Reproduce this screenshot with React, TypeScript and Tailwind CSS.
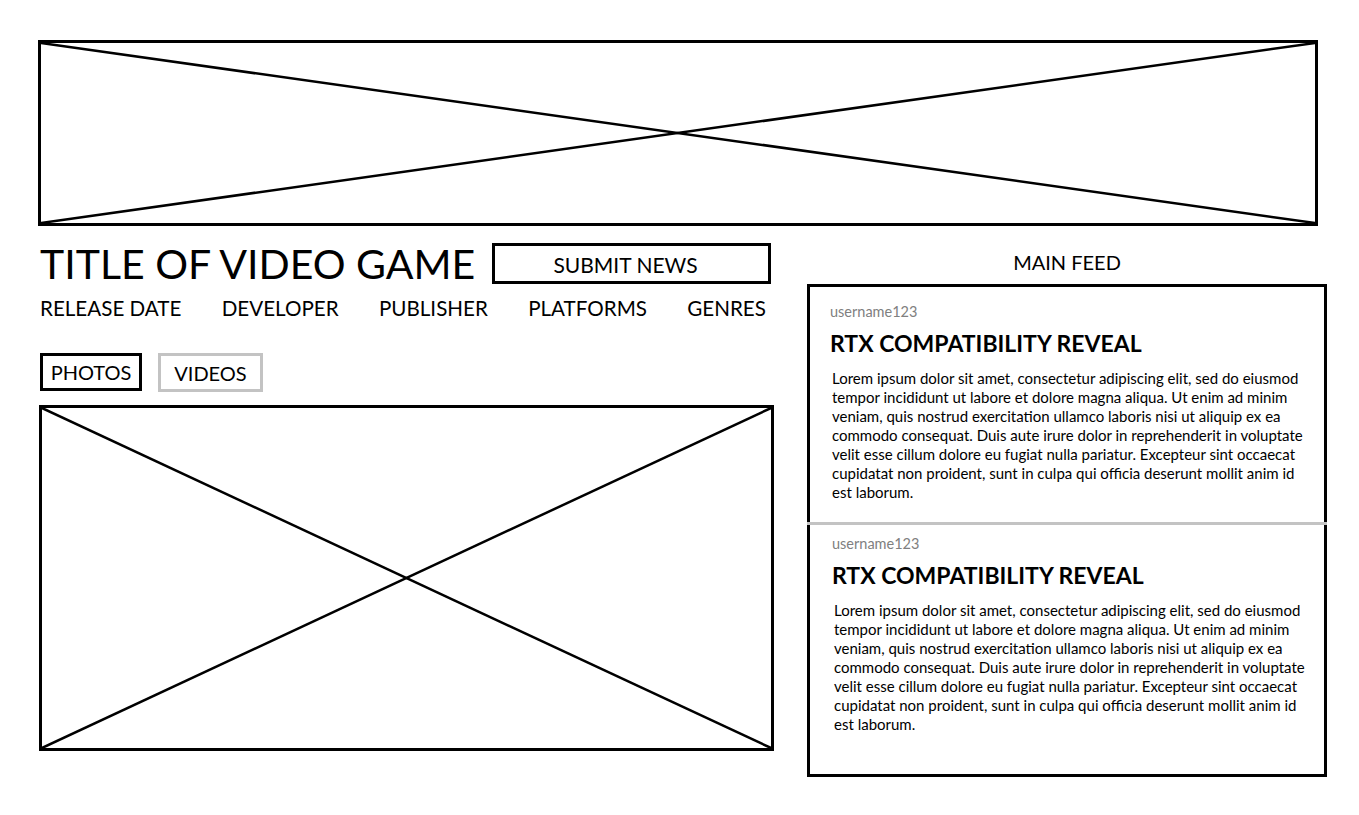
import React from "react";

const Cross = () => (
  <svg className="absolute inset-0 w-full h-full" preserveAspectRatio="none" viewBox="0 0 100 100">
    <line x1="0" y1="0" x2="100" y2="100" stroke="black" strokeWidth="2.5" vectorEffect="non-scaling-stroke" />
    <line x1="100" y1="0" x2="0" y2="100" stroke="black" strokeWidth="2.5" vectorEffect="non-scaling-stroke" />
  </svg>
);

const lines = [
  "Lorem ipsum dolor sit amet, consectetur adipiscing elit, sed do eiusmod",
  "tempor incididunt ut labore et dolore magna aliqua. Ut enim ad minim",
  "veniam, quis nostrud exercitation ullamco laboris nisi ut aliquip ex ea",
  "commodo consequat. Duis aute irure dolor in reprehenderit in voluptate",
  "velit esse cillum dolore eu fugiat nulla pariatur. Excepteur sint occaecat",
  "cupidatat non proident, sunt in culpa qui officia deserunt mollit anim id",
  "est laborum.",
];

const Post = ({ second }: { second?: boolean }) => (
  <div className={second ? "pl-[22px] pt-[10px]" : "pl-[20px] pt-[16px] pb-[20px]"}>
    <div className="text-[14.5px] leading-[18px] text-[#808080]">username123</div>
    <div className="mt-[7px] text-[23px] leading-[30px] font-bold text-black">RTX COMPATIBILITY REVEAL</div>
    <div className="mt-[11px] ml-[2px] text-[15px] leading-[19px] text-black">
      {lines.map((l, i) => (
        <div key={i} className="whitespace-nowrap">{l}</div>
      ))}
    </div>
  </div>
);

export default function App() {
  return (
    <div className="min-h-screen bg-white pt-[40px] pl-[38px]" style={{ fontFamily: "Lato, 'Open Sans', sans-serif" }}>
      <div className="relative h-[186px] w-[1280px] border-[3px] border-black">
        <Cross />
      </div>
      <div className="flex gap-[34px] mt-[17px]">
        <div className="w-[735px] shrink-0 pl-[1px]">
          <div className="flex items-start">
            <div className="whitespace-nowrap text-[41px] leading-[40px] text-black ml-[1px] mt-[1px]">TITLE OF VIDEO GAME</div>
            <div className="ml-auto mr-[2px] w-[279px] h-[41px] border-[3px] border-black flex items-center justify-center text-[21px] text-black pt-[3px] pr-[12px]">
              SUBMIT NEWS
            </div>
          </div>
          <div className="flex justify-between mt-[12px] pr-[7px] pl-[1px] text-[20.6px] leading-[24px] text-black">
            <span>RELEASE DATE</span>
            <span>DEVELOPER</span>
            <span>PUBLISHER</span>
            <span>PLATFORMS</span>
            <span>GENRES</span>
          </div>
          <div className="flex gap-[16px] mt-[33px] ml-[1px]">
            <div className="w-[102px] h-[38px] border-[3px] border-black flex items-center justify-center text-[20px] text-black">PHOTOS</div>
            <div className="w-[105px] h-[39px] border-[3px] border-[#c3c3c3] flex items-center justify-center text-[20px] text-black">VIDEOS</div>
          </div>
          <div className="relative mt-[13px] h-[346px] w-[735px] border-[3px] border-black">
            <Cross />
          </div>
        </div>
        <div className="w-[520px] shrink-0">
          <div className="text-center text-[20px] leading-[24px] text-black mt-[7px]">MAIN FEED</div>
          <div className="mt-[10px] h-[493px] border-[3px] border-black relative">
            <Post />
            <div className="h-[3px] bg-[#c3c3c3] -mx-[3px]" />
            <Post second />
          </div>
        </div>
      </div>
    </div>
  );
}
